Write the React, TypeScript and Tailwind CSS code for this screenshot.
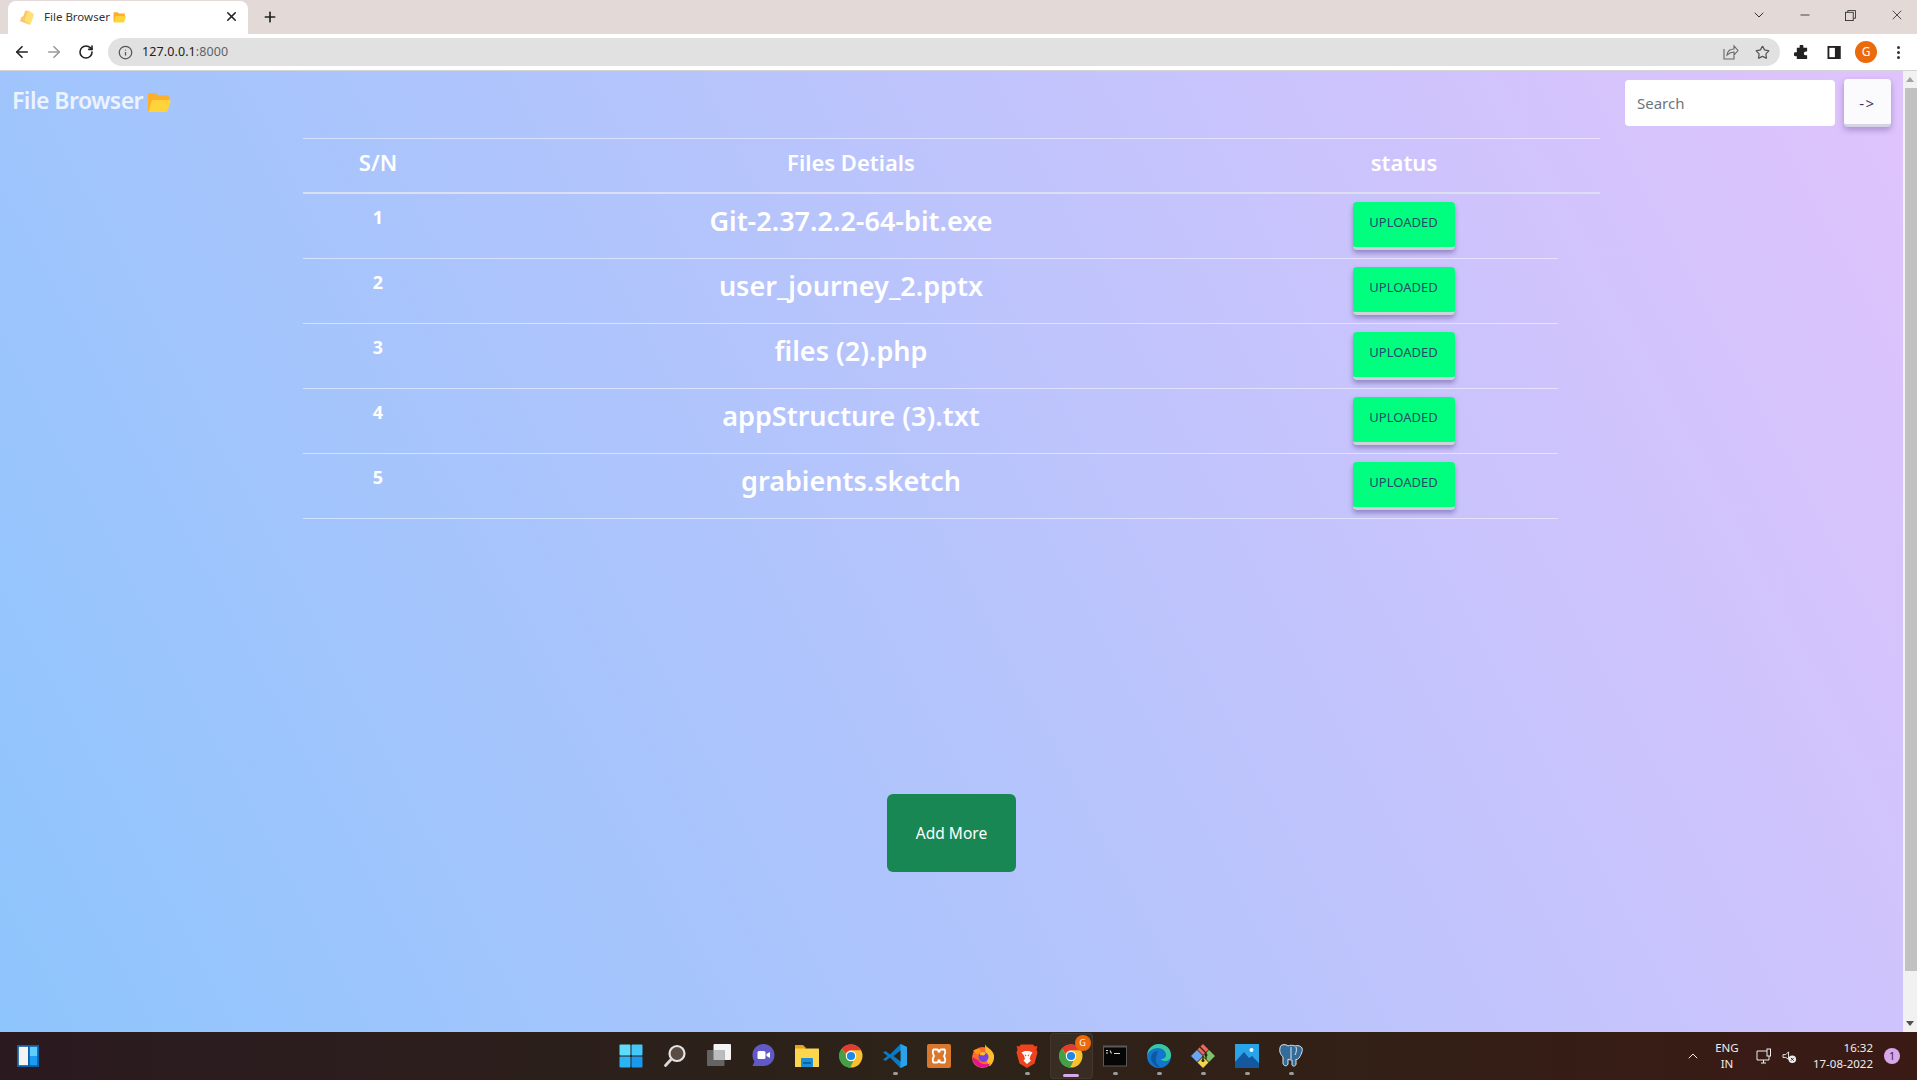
import { ArrowLeft, ArrowRight, ChevronDown, ChevronUp, Info, Minus, Plus, RotateCw, Star, X } from "lucide-react";

const files = [
  "Git-2.37.2.2-64-bit.exe",
  "user_journey_2.pptx",
  "files (2).php",
  "appStructure (3).txt",
  "grabients.sketch",
];

function FolderIcon({ className }: { className: string }) {
  return (
    <svg viewBox="0 0 24 22" className={className}>
      <path d="M1 3.500C1 2.700 1.700 2 2.500 2h6l2.500 2.500h9.500c.8 0 1.500.7 1.500 1.500v4L3 20H1z" fill="#fdae2b" />
      <path d="M5 9h17.500c.8 0 1.300.7 1.100 1.400l-3 9.300c-.2.800-.9 1.300-1.700 1.300H1.500z" fill="#ffd43b" />
    </svg>
  );
}

function ChromeIcon() {
  return (
    <svg viewBox="0 0 24 24" className="w-6 h-6">
      <circle cx="12" cy="12" r="11.500" fill="#fbc02d" />
      <path d="M12 .5a11.500 11.500 0 0 1 10 5.800H12a5.700 5.700 0 0 0-5.300 3.600L3 4.200A11.500 11.500 0 0 1 12 .5z" fill="#e53935" />
      <path d="M3 4.200l5.200 9.100a5.700 5.700 0 0 0 6.200 3.600l-3.200 6.600A11.500 11.500 0 0 1 3 4.200z" fill="#43a047" />
      <circle cx="12" cy="12" r="5.200" fill="#fff" />
      <circle cx="12" cy="12" r="4.100" fill="#1e88e5" />
    </svg>
  );
}

function TaskbarIcons() {
  return [
    <svg key="win" viewBox="0 0 24 24" className="w-6 h-6">
      <rect x="0.500" y="0.500" width="11" height="11" rx="1" fill="#5fdcfc" />
      <rect x="12.500" y="0.500" width="11" height="11" rx="1" fill="#43c8f8" />
      <rect x="0.500" y="12.500" width="11" height="11" rx="1" fill="#2bb4f4" />
      <rect x="12.500" y="12.500" width="11" height="11" rx="1" fill="#1a98ee" />
    </svg>,
    <svg key="search" viewBox="0 0 24 24" className="w-6 h-6" fill="none">
      <circle cx="14" cy="9.500" r="7.500" fill="#5a4c42" stroke="#e4e4e4" strokeWidth="2.200" />
      <path d="M8.500 15L2.500 21.500" stroke="#d8d8d8" strokeWidth="2.800" strokeLinecap="round" />
    </svg>,
    <svg key="tasks" viewBox="0 0 24 24" className="w-6 h-6">
      <rect x="6.500" y="0" width="17.500" height="16" rx="1" fill="#f4f4f4" />
      <rect x="0" y="6" width="17.500" height="16" rx="1" fill="#646464" />
      <rect x="6.500" y="6" width="11" height="10" fill="#bcbcbc" />
    </svg>,
    <svg key="chat" viewBox="0 0 24 24" className="w-6 h-6">
      <path d="M12.500 0C19 0 23.500 5 23.500 11S19 22 12.500 22H1.500L3.500 17.500C2 15.500 1.500 13.500 1.500 11 1.500 5 6 0 12.500 0z" fill="#6259c8" />
      <rect x="6.500" y="7" width="8" height="8" rx="1.500" fill="#fff" />
      <path d="M15.500 10l3.500-2v6l-3.500-2z" fill="#fff" />
    </svg>,
    <svg key="explorer" viewBox="0 0 24 24" className="w-6 h-6">
      <path d="M0 1h8l2.500 2.500v2H0z" fill="#e8a317" />
      <rect y="4.500" width="24" height="18.500" rx="0.500" fill="#fcd64f" />
      <rect x="6" y="14" width="12" height="9" rx="1" fill="#1a8ed8" />
      <rect x="8" y="18" width="8" height="2" fill="#0f639f" />
    </svg>,
    <ChromeIcon key="chrome" />,
    <svg key="code" viewBox="0 0 24 24" className="w-6 h-6">
      <path d="M17.500 0L24 3v18l-6.500 3L7 13.500l-4.500 3.500L0 15.500 4.500 12 0 8.500 2.500 7 7 10.500z" fill="#0a7ac7" />
      <path d="M17.500 0L24 3v18l-6.500 3z" fill="#2aa3ec" />
      <path d="M17.500 6.500L10.500 12l7 5.500z" fill="#2a2418" />
    </svg>,
    <svg key="xampp" viewBox="0 0 24 24" className="w-6 h-6">
      <rect width="24" height="24" rx="2" fill="#d9772c" />
      <path d="M6.500 5.500h3.500c1 0 1.500 1 1.500 2h1c0-1 .5-2 1.500-2h3.500c1 1 1 4-.5 6.500 1.500 2.500 1.500 5.500.5 6.500H14c-1 0-1.500-1-1.500-2h-1c0 1-.5 2-1.500 2H6.500c-1-1-1-4 .5-6.500C5.500 9.500 5.500 6.500 6.500 5.500z" fill="none" stroke="#fff" strokeWidth="1.800" />
    </svg>,
    <svg key="firefox" viewBox="0 0 24 24" className="w-6 h-6">
      <circle cx="11.500" cy="13.500" r="10.500" fill="#ff6b2c" />
      <path d="M14 0c0 3 8 5 9 11.500.5 4-1 8-4 10.500-1 .5-3-5-4.500-9z" fill="#ffbd2e" />
      <path d="M1.500 13c0 6 4.500 10.500 10 10.500 3 0 6-1.500 8-4-4 1.500-10 1-12-3z" fill="#e31587" />
      <circle cx="12.500" cy="13" r="5" fill="#7543e3" />
      <path d="M9 9c2-1.500 4-1.500 6 0l-2 2.500-4-.5z" fill="#ffbd2e" />
      <path d="M2 7c2-2 5-2.500 7-1.500L10 8 6.500 10.500z" fill="#ff980e" />
    </svg>,
    <svg key="brave" viewBox="0 0 24 24" className="w-6 h-6">
      <path d="M6 .5h12l2 2 2.500-.5-1 3.500 1 3-3 11L12 24l-7.500-4.500-3-11 1-3-1-3.500L4 2.500z" fill="#f1421f" />
      <path d="M6.500 8.500L10 7h4l3.500 1.500-2 3-1 3.500 1.500 1.500L12 20l-3.500-3.500L10 15l-1-3.500z" fill="#fff" />
      <path d="M9.500 10l2 1.500-1 1zM14.500 10l-2 1.500 1 1z" fill="#f1421f" />
    </svg>,
    <div key="active" className="relative w-[43px] h-[46px] rounded bg-white/5 border border-white/5 flex items-center justify-center">
      <ChromeIcon />
      <span className="absolute right-[1px] top-[1px] w-[16px] h-[16px] rounded-full bg-[#ea6a0c] text-[9px] leading-[16px] text-center text-white">G</span>
      <span className="absolute bottom-[1px] left-1/2 -translate-x-1/2 w-4 h-[3px] rounded-sm bg-[#d8a8e8]" />
    </div>,
    <svg key="cmd" viewBox="0 0 24 24" className="w-6 h-6">
      <rect y="1.500" width="24" height="21" fill="#5a5a5a" />
      <rect x="1" y="3.500" width="22" height="18" fill="#060606" />
      <path d="M3 6.500h2M3 9h2M7 6.500l1.500 3M11 9.500h6" stroke="#ddd" strokeWidth="1.100" />
    </svg>,
    <svg key="edge" viewBox="0 0 24 24" className="w-6 h-6">
      <circle cx="12" cy="12" r="12" fill="#1376cc" />
      <path d="M12 0c7 0 12 5 12 11 0 4-3 6-6 6-2 0-4-1-4-2 4 0 5-2 5-4 0-4-4-7-8-7C6 4 2 7 0 11 1 4 6 0 12 0z" fill="#36c9a0" />
      <path d="M11 7c-5 0-7 4-7 7 0 5 5 10 11 9.500-4-1-6-4-6-7.500 0-3 1-6 2-9z" fill="#0c59a4" />
    </svg>,
    <svg key="git" viewBox="0 0 24 24" className="w-6 h-6">
      <path d="M12 0l5.500 5.500L12 11 6.500 5.500z" fill="#e8695d" />
      <path d="M6 6l6 6-6 6-6-6z" fill="#6ba6f0" />
      <path d="M18 6l6 6-6 6-6-6z" fill="#7cc36a" />
      <path d="M12 13l5.500 5.500L12 24l-5.500-5.500z" fill="#f3d44e" />
      <path d="M9 3l6 6v6M12 12l0 5" stroke="#2d2418" strokeWidth="1.300" fill="none" />
      <circle cx="15" cy="11" r="1.500" fill="#2d2418" />
      <circle cx="12" cy="16.500" r="1.500" fill="#2d2418" />
    </svg>,
    <svg key="photos" viewBox="0 0 24 24" className="w-6 h-6">
      <rect width="24" height="24" fill="#2aa4e8" />
      <circle cx="16.500" cy="6" r="2" fill="#eef8fe" />
      <path d="M0 18l9-10 5 6 3-2 7 7v5H0z" fill="#14589f" />
    </svg>,
    <svg key="pg" viewBox="0 0 24 24" className="w-6 h-6">
      <path d="M3 1c3-1 5 0 6 1 2-1 5-1 7 0 3-1 6 0 7 2 1 3-1 7-3 10-1 1-2 2-3 1v5c0 2-3 3-4 1v-5c-1 0-3 0-4-1v5c-1 3-5 2-5-1v-6C2 11 0 8 1 4c0-1 1-3 2-3z" fill="#336b99" stroke="#dfe6ec" strokeWidth="1" />
      <path d="M12 3v12M17 3c1 3 0 6-1 8" stroke="#dfe6ec" strokeWidth="1" fill="none" />
    </svg>,
  ];
}

// small dots under pinned apps that are running
const runningDots = [6, 9, 11, 12, 13, 14, 15];

export default function App() {
  return (
    <div className="h-screen flex flex-col overflow-hidden font-['Noto_Sans',sans-serif]">
      {/* browser tab strip */}
      <div className="h-[34px] shrink-0 bg-[#e3dad8] flex items-end pl-[8px]">
        <div className="h-[33px] w-[240px] bg-white rounded-t-lg flex items-center pl-[12px] pr-[11px] pb-[2px] text-[11.500px] text-[#333]">
          <FolderIcon className="w-[14px] h-[14px] mr-[10px] -rotate-[70deg] opacity-70" />
          <span>File Browser</span>
          <FolderIcon className="w-[13px] h-[12px] ml-[3px]" />
          <X className="w-[15px] h-[15px] ml-auto text-[#222] mr-[-2px]" strokeWidth={2.5} />
        </div>
        <Plus className="w-[16px] h-[16px] ml-[14px] mb-[9px] text-[#222]" strokeWidth={2.5} />
        <div className="ml-auto h-full flex items-center text-[#333] pb-[4px]">
          <ChevronDown className="w-[16px] h-[16px] mr-[31px]" strokeWidth={1.5} />
          <Minus className="w-[14px] h-[14px] mr-[33px]" strokeWidth={1.5} />
          <svg viewBox="0 0 12 12" className="w-[11px] h-[11px] mr-[33px]" fill="none" stroke="#333">
            <rect x="0.500" y="2.500" width="8.500" height="9" />
            <path d="M3 2.500V.5h8.500v8.500H9" />
          </svg>
          <X className="w-[16px] h-[16px] mr-[12px]" strokeWidth={1.3} />
        </div>
      </div>

      {/* browser toolbar */}
      <div className="h-[37px] shrink-0 bg-white border-b border-[#d4d4d8] flex items-center">
        <ArrowLeft className="w-[18px] h-[18px] ml-[13px] text-[#222]" strokeWidth={2.2} />
        <ArrowRight className="w-[18px] h-[18px] ml-[14px] text-[#9a9a9a]" strokeWidth={2.2} />
        <RotateCw className="w-[16px] h-[16px] ml-[15px] text-[#222]" strokeWidth={2.4} />
        <div className="ml-[14px] h-[28px] w-[1672px] rounded-full bg-[#e1e1e1] flex items-center pl-[10px] pr-[10px]">
          <Info className="w-[15px] h-[15px] text-[#555]" strokeWidth={2} />
          <span className="ml-[9px] text-[12.500px] text-[#5f6368] tracking-[0.1px]"><span className="text-[#222]">127.0.0.1</span>:8000</span>
          <svg viewBox="0 0 16 16" className="w-[16px] h-[16px] ml-auto mr-[16px]" fill="none" stroke="#666" strokeWidth="1.100">
            <path d="M1 5v10h10v-3" />
            <path d="M4 11c.5-4 3-6 7-6V2l4 4.500L11 11V8c-3 0-5 1-7 3z" />
          </svg>
          <Star className="w-[15px] h-[15px] text-[#555]" strokeWidth={2} />
        </div>
        <svg viewBox="0 0 16 16" className="w-[15px] h-[15px] ml-[14px]" fill="#222">
          <path d="M6 1.500a2 2 0 0 1 4 0V3h4v4h-1.500a2 2 0 0 0 0 4H14v4H3v-3H1.800a2.200 2.200 0 0 1 0-4.400H3V3h3z" />
        </svg>
        <svg viewBox="0 0 14 14" className="w-[14px] h-[13px] ml-[18px]" fill="none" stroke="#222" strokeWidth="2">
          <rect x="1" y="1" width="12" height="12" />
          <rect x="9" y="1" width="4" height="12" fill="#222" />
        </svg>
        <span className="ml-[14px] w-[22px] h-[22px] rounded-full bg-[#ea6a0c] text-white text-[12px] leading-[22px] text-center">G</span>
        <div className="ml-[20px] flex flex-col gap-[2px]">
          <span className="w-[3px] h-[3px] rounded-full bg-[#333]" />
          <span className="w-[3px] h-[3px] rounded-full bg-[#333]" />
          <span className="w-[3px] h-[3px] rounded-full bg-[#333]" />
        </div>
      </div>

      {/* page */}
      <div className="flex-1 min-h-0 flex">
        <div className="flex-1 min-w-0 bg-[linear-gradient(62deg,#8ec5fc_0%,#e0c3fc_100%)]">
          <nav className="h-[67px] flex justify-between pl-[12px] pr-[12px] pt-[8px]">
            <div className="flex items-start pt-[5px] text-[23px] font-semibold tracking-[-0.5px] text-white/80 leading-[32px]">
              File Browser
              <FolderIcon className="w-[24px] h-[22px] ml-[4px] mt-[7px]" />
            </div>
            <div className="flex items-start gap-[9px]">
              <input
                placeholder="Search"
                className="w-[210px] h-[46px] mt-[1px] rounded-[4px] bg-white px-[12px] text-[15px] placeholder:text-[#6c757d] outline-none"
              />
              <button className="w-[47px] h-[48px] pt-[3px] rounded-[4px] bg-[#fbfbfd] border-b-[3px] border-[#d5d3e6] shadow-[0_3px_6px_rgba(70,50,120,0.35)] text-[15px] tracking-[1.500px] text-[#3b3563]">
                -&gt;
              </button>
            </div>
          </nav>

          <div className="ml-[303px] w-[1297px]">
            <div className="grid grid-cols-[150px_796px_310px_41px] h-[56px] items-center pb-[7px] border-t border-white/50 border-b-2 border-b-[#dcdff0] text-center text-[22px] font-semibold text-white">
              <div>S/N</div>
              <div>Files Detials</div>
              <div>status</div>
              <div />
            </div>
            {files.map((name, i) => (
              <div key={name} className="grid grid-cols-[150px_796px_309px] w-[1255px] h-[65px] border-b border-white/50 text-center text-white font-semibold">
                <div className="pt-[10px] text-[18px] font-bold">{i + 1}</div>
                <div className="pt-[8px] text-[27px] leading-[38px]">{name}</div>
                <div className="pt-[8px]">
                  <button className="w-[102px] h-[48px] rounded-[4px] bg-[#00ff7f] border-b-[3px] border-[#cfd2dc] shadow-[0_3px_5px_rgba(60,40,110,0.4)] text-[13px] font-normal text-[#2b4a6a] pb-[4px]">
                    UPLOADED
                  </button>
                </div>
              </div>
            ))}
          </div>

          <div className="mt-[275px] flex justify-center">
            <button className="w-[129px] h-[78px] pt-[1px] rounded-[6px] bg-[#198754] text-white text-[15.500px]">Add More</button>
          </div>
        </div>

        {/* scrollbar */}
        <div className="w-[14px] bg-[#f1f1f1] flex flex-col items-center">
          <svg viewBox="0 0 10 6" className="w-[8px] h-[5px] mt-[6px] mb-[6px]" fill="#a3a3a3"><path d="M5 0l5 6H0z" /></svg>
          <div className="ml-[2px] w-[12px] h-[883px] bg-[#c1c1c1]" />
          <svg viewBox="0 0 10 6" className="w-[8px] h-[5px] mt-auto mb-[6px]" fill="#505050"><path d="M0 0h10L5 6z" /></svg>
        </div>
      </div>

      {/* windows taskbar */}
      <div className="h-[48px] shrink-0 flex items-center bg-[linear-gradient(90deg,#2a1a20_0%,#2d2318_50%,#3a1a14_100%)] text-[#eee]">
        <svg viewBox="0 0 24 24" className="w-[24px] h-[22px] ml-[16px]">
          <rect width="24" height="24" fill="#0f5fa8" />
          <rect x="2" y="2" width="10" height="20" fill="#f4f4f4" />
          <rect x="14" y="2" width="8" height="10" fill="#5fcdfd" />
          <rect x="14" y="12" width="8" height="10" fill="#1a9df0" />
        </svg>
        <div className="ml-[569px] flex">
          {TaskbarIcons().map((icon, i) => (
            <div key={i} className="relative w-[44px] h-[48px] flex items-center justify-center">
              {icon}
              {runningDots.includes(i) && (
                <span className="absolute bottom-[5px] w-[5px] h-[3px] rounded-sm bg-[#9a9a9a]" />
              )}
            </div>
          ))}
        </div>
        <div className="ml-auto flex items-center">
          <ChevronUp className="w-[16px] h-[16px] mr-[11px]" strokeWidth={1.5} />
          <div className="w-[30px] text-center text-[11.500px] leading-[16px] mr-[14px]">ENG<br />IN</div>
          <svg viewBox="0 0 16 16" className="w-[16px] h-[16px] mr-[10px]" fill="none" stroke="#eee">
            <path d="M11 3H1v9h12V8M5 15h5M7.500 12v3" />
            <rect x="11" y="1" width="3.500" height="7" />
          </svg>
          <svg viewBox="0 0 16 16" className="w-[15px] h-[15px] mr-[16px]" fill="none" stroke="#eee">
            <path d="M1 6h3l3-3v8L4 9H1z" />
            <circle cx="11" cy="11" r="4" fill="#eee" stroke="none" />
            <path d="M9.500 9.500l3 3m0-3l-3 3" stroke="#222" />
          </svg>
          <div className="text-right text-[11.500px] leading-[16px] mr-[11px]">16:32<br />17-08-2022</div>
          <span className="w-[16px] h-[16px] rounded-full bg-[#d8a8e8] text-[#222] text-[10px] leading-[16px] text-center mr-[17px]">1</span>
        </div>
      </div>
    </div>
  );
}
